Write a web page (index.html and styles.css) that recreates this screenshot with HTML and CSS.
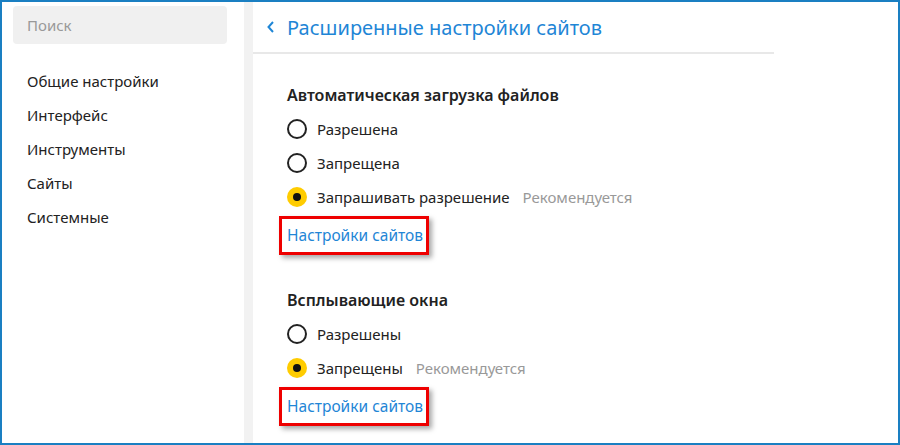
FILE: index.html
```html
<!DOCTYPE html>
<html lang="ru">
<head>
  <meta charset="UTF-8" />
  <meta name="viewport" content="width=device-width, initial-scale=1.0"/>
  <title>Расширенные настройки сайтов</title>
  <link rel="stylesheet" href="styles.css">
</head>
<body>
<div class="window">
  <div class="sidebar">
    <div class="search">Поиск</div>
    <ul class="menu">
      <li>Общие настройки</li>
      <li>Интерфейс</li>
      <li>Инструменты</li>
      <li>Сайты</li>
      <li>Системные</li>
    </ul>
  </div>
  <div class="gutter"></div>
  <div class="main">
    <div class="header">
      <svg class="back" width="10" height="14" viewBox="0 0 10 14">
        <path d="M7 2 L2.5 7 L7 12" fill="none" stroke="#1f86d6" stroke-width="2"/>
      </svg>
      <span class="title">Расширенные настройки сайтов</span>
    </div>
    <div class="content">
      <div class="section">
        <div class="section-title">Автоматическая загрузка файлов</div>
        <div class="option"><span class="radio"></span>Разрешена</div>
        <div class="option"><span class="radio"></span>Запрещена</div>
        <div class="option"><span class="radio checked"></span>Запрашивать разрешение<span class="hint">Рекомендуется</span></div>
        <a class="site-link" href="#">Настройки сайтов</a>
      </div>
      <div class="section second">
        <div class="section-title">Всплывающие окна</div>
        <div class="option"><span class="radio"></span>Разрешены</div>
        <div class="option"><span class="radio checked"></span>Запрещены<span class="hint">Рекомендуется</span></div>
        <a class="site-link" href="#">Настройки сайтов</a>
      </div>
    </div>
  </div>
</div>
</body>
</html>
```

FILE: styles.css
```css
body {
  margin: 0;
  font-family: "Noto Sans", "Open Sans", sans-serif;
  color: #222;
}
.window {
  width: 900px;
  height: 445px;
  box-sizing: border-box;
  border: 2px solid #1a7fc2;
  display: flex;
  background: #fff;
  overflow: hidden;
}
.sidebar {
  width: 242px;
  flex-shrink: 0;
}
.search {
  margin: 4px 0 0 11px;
  width: 214px;
  height: 38px;
  box-sizing: border-box;
  padding-left: 14px;
  line-height: 38px;
  background: #f0f0f0;
  border-radius: 4px;
  color: #999;
  font-size: 15px;
}
.menu {
  list-style: none;
  margin: 20px 0 0 0;
  padding: 0 0 0 25px;
}
.menu li {
  line-height: 34px;
  font-size: 15px;
}
.gutter {
  width: 9px;
  flex-shrink: 0;
  background: #f2f2f2;
}
.main {
  flex: 1;
}
.header {
  width: 521px;
  height: 50px;
  border-bottom: 2px solid #e8e8e8;
  display: flex;
  align-items: center;
}
.back {
  margin-left: 13px;
  margin-right: 11px;
}
.title {
  font-size: 20px;
  color: #1f86d6;
}
.content {
  padding: 24px 0 0 34px;
}
.section-title {
  line-height: 34px;
  font-size: 16px;
  font-weight: 600;
}
.second {
  margin-top: 28px;
}
.option {
  display: flex;
  align-items: center;
  height: 34px;
  font-size: 15px;
}
.radio {
  width: 20px;
  height: 20px;
  box-sizing: border-box;
  border: 2px solid #222;
  border-radius: 50%;
  margin-right: 10px;
  position: relative;
}
.radio.checked {
  border: none;
  background: #ffcc00;
}
.radio.checked::after {
  content: "";
  position: absolute;
  left: 6px;
  top: 6px;
  width: 8px;
  height: 8px;
  border-radius: 50%;
  background: #111;
}
.hint {
  color: #999;
  margin-left: 13px;
}
.site-link {
  display: inline-block;
  margin: 2px 0 0 -8px;
  padding: 0 3px 0 5px;
  line-height: 33px;
  border: 3px solid #ee0000;
  box-shadow: 3px 3px 5px rgba(0, 0, 0, 0.35);
  color: #1f86d6;
  text-decoration: none;
  font-size: 15.5px;
}
```
